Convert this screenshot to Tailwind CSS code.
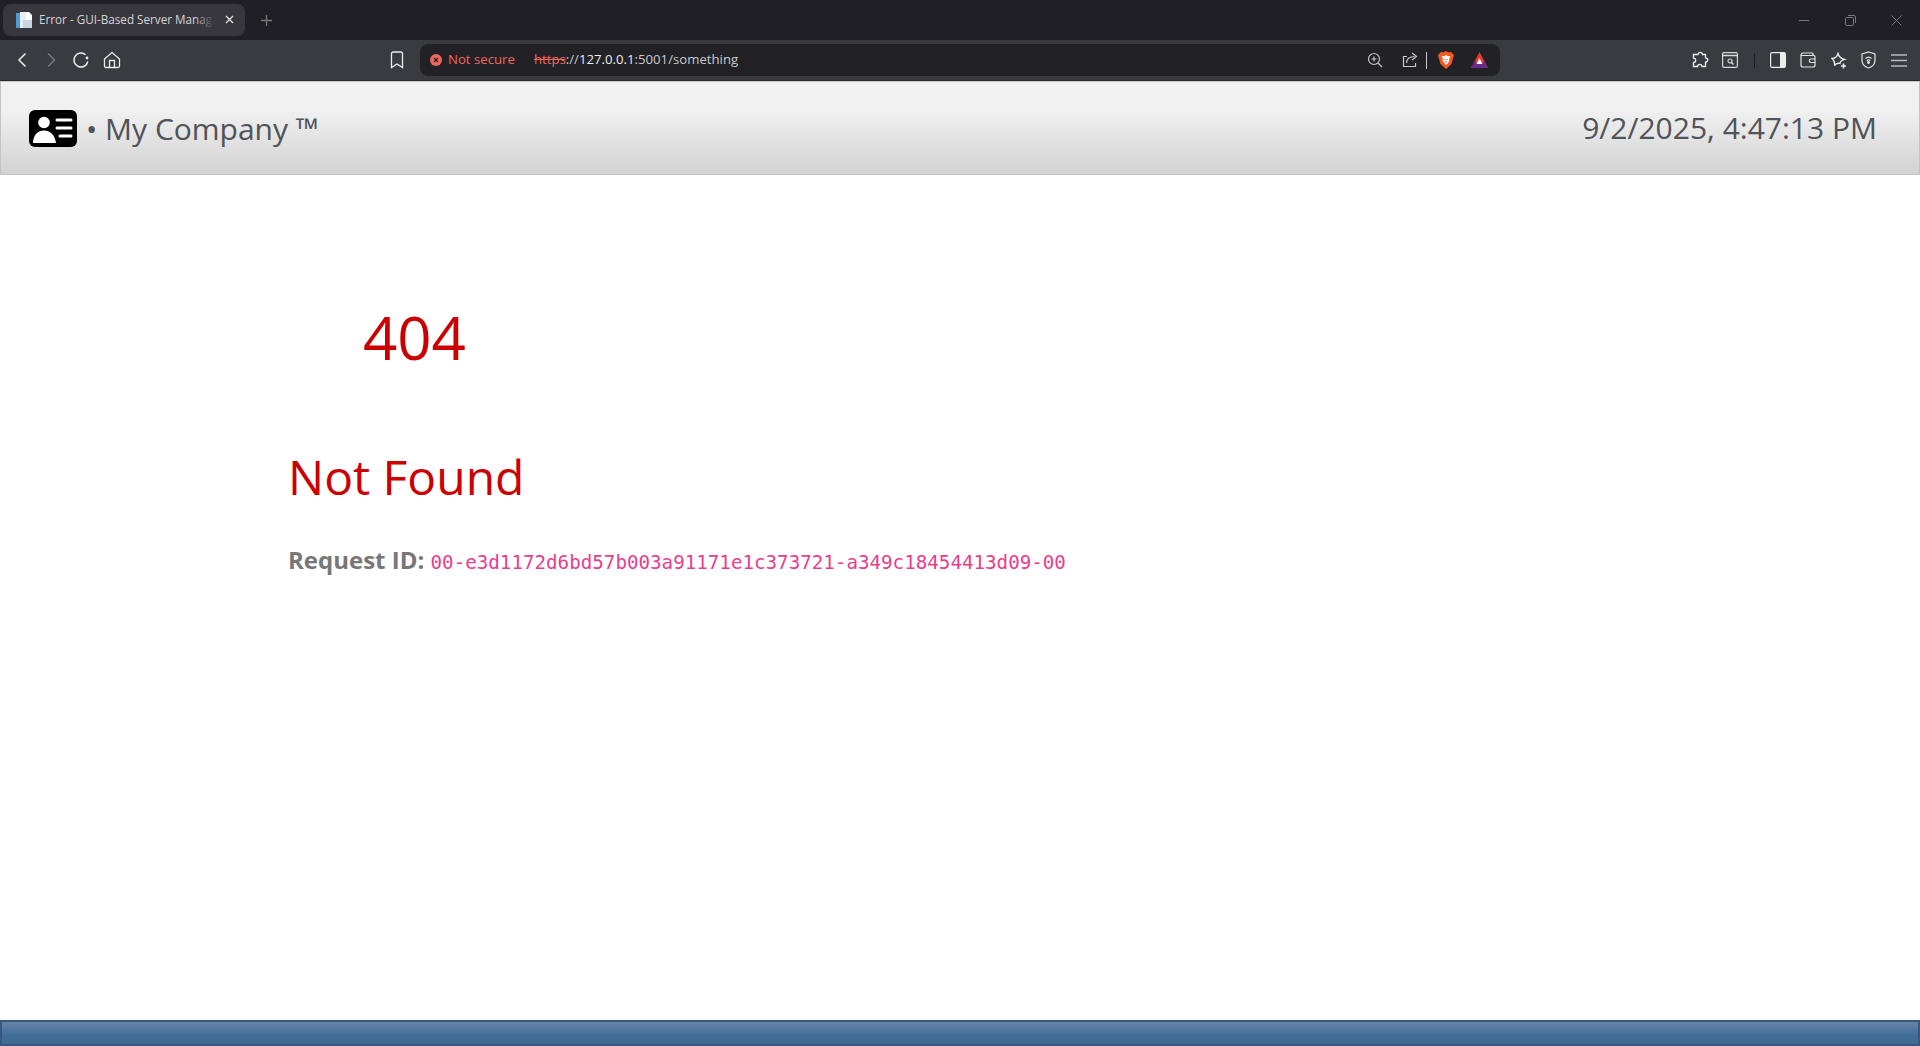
<!DOCTYPE html>
<html lang="en">
<head>
    <meta charset="UTF-8">
    <title>Error - GUI-Based Server Management</title>
    <script src="https://cdn.jsdelivr.net/npm/@tailwindcss/browser@4"></script>
</head>
<body class="flex flex-col h-screen overflow-hidden bg-white font-['Open_Sans',sans-serif]">
    <!-- browser tab strip -->
    <div class="flex items-center h-[40px] shrink-0 bg-[#1f1f25] pl-[3px]">
        <div class="flex items-center w-[242px] h-[32px] rounded-lg bg-[#37373d] pl-[12px] pr-[11px] mt-[-1px]">
            <svg class="w-[18px] h-[18px] shrink-0" viewBox="0 0 18 18">
                <rect x="1" y="2" width="5" height="15" fill="#4f9bd9"/>
                <rect x="5" y="1" width="8" height="16" fill="#e8edf2"/>
                <path d="M11 1h3l3 3v13h-6z" fill="#ffffff"/>
                <rect x="8" y="9" width="9" height="8" fill="#c9d6e2"/>
            </svg>
            <div class="relative ml-[6px] w-[175px] overflow-hidden whitespace-nowrap text-[11.7px] text-[#d6d6d9]">
                Error - GUI-Based Server Management
                <div class="absolute inset-y-0 right-0 w-[20px] bg-gradient-to-r from-transparent to-[#37373d]"></div>
            </div>
            <svg class="w-[9px] h-[9px] ml-auto" viewBox="0 0 9 9" fill="none" stroke="#e4e4e6" stroke-width="1.3"><path d="M1 1l7 7M8 1l-7 7"/></svg>
        </div>
        <svg class="w-[11px] h-[11px] ml-[16px]" viewBox="0 0 11 11" fill="none" stroke="#77777c" stroke-width="1.3"><path d="M5.5 0v11M0 5.5h11"/></svg>
        <div class="flex items-center ml-auto pr-[18px] gap-[35px]">
            <svg class="w-[11px] h-[11px]" viewBox="0 0 11 11" fill="none" stroke="#77777c"><path d="M0 5.5h10"/></svg>
            <svg class="w-[11px] h-[11px]" viewBox="0 0 11 11" fill="none" stroke="#77777c"><rect x=".5" y="2.5" width="8" height="8" rx="1"/><path d="M3 .5h6a1.5 1.5 0 0 1 1.5 1.5v6"/></svg>
            <svg class="w-[11px] h-[11px]" viewBox="0 0 11 11" fill="none" stroke="#77777c"><path d="M.5.5l10 10M10.5.5l-10 10"/></svg>
        </div>
    </div>

    <!-- browser toolbar -->
    <div class="flex items-center h-[41px] shrink-0 bg-[#3a3a41] border-b border-[#2a2a2f] relative">
        <div class="flex items-center pl-[16px] w-[404px]">
            <svg class="w-[12px] h-[16px]" viewBox="0 0 12 16" fill="none" stroke="#ececee" stroke-width="1.5"><path d="M9.5 1.5L3 8l6.5 6.500"/></svg>
            <svg class="w-[12px] h-[16px] ml-[17px]" viewBox="0 0 12 16" fill="none" stroke="#77777c" stroke-width="1.5"><path d="M3 1.5L9.5 8 3 14.500"/></svg>
            <svg class="w-[18px] h-[18px] ml-[15px]" viewBox="0 0 18 18" fill="none" stroke="#ececee" stroke-width="1.5"><path d="M15.8 10.5A7 7 0 1 1 13.6 3.800"/><circle cx="15" cy="7" r="1.400" fill="#ececee" stroke="none"/></svg>
            <svg class="w-[18px] h-[18px] ml-[13px]" viewBox="0 0 18 18" fill="none" stroke="#ececee" stroke-width="1.3"><path d="M1.5 8L9 1.5 16.5 8v7a1.5 1.5 0 0 1-1.5 1.5H3A1.5 1.5 0 0 1 1.5 15z"/><path d="M6.500 16.500V9.500h5v7"/></svg>
            <svg class="w-[14px] h-[18px] ml-auto" viewBox="0 0 14 18" fill="none" stroke="#ececee" stroke-width="1.3"><path d="M1.500 2.500a1.500 1.500 0 0 1 1.500-1.500h8a1.500 1.500 0 0 1 1.500 1.500v14L7 13l-5.500 3.500z"/></svg>
        </div>
        <div class="flex items-center w-[1080px] h-[32px] ml-[16px] rounded-lg bg-[#212126] pl-[10px]">
            <svg class="w-[12px] h-[12px] shrink-0" viewBox="0 0 12 12"><circle cx="6" cy="6" r="6" fill="#f0675c"/><path d="M4 4l4 4M8 4l-4 4" stroke="#212126" stroke-width="1.2"/></svg>
            <span class="ml-[6px] text-[13.2px] text-[#f0675c]">Not secure</span>
            <span class="ml-[19px] text-[13.2px] text-[#c9c9cc]"><span class="line-through text-[#f0675c]">https</span>://<span class="text-[#eeeeee]">127.0.0.1</span>:5001/something</span>
            <div class="flex items-center ml-auto pr-[12px]">
                <svg class="w-[16px] h-[16px]" viewBox="0 0 16 16" fill="none" stroke="#c8c8cb" stroke-width="1.2"><circle cx="7" cy="7" r="5.5"/><path d="M11 11l4 4M7 4.500v5M4.500 7h5"/></svg>
                <svg class="w-[16px] h-[16px] ml-[19px]" viewBox="0 0 16 16" fill="none" stroke="#c8c8cb" stroke-width="1.2"><path d="M5 4.500H1.500v10h12V11"/><path d="M4.500 11c0-4 3-6.500 8-6.500M10 1l4.500 3.500L10 8"/></svg>
                <div class="w-px h-[17px] bg-[#c8c8cb] ml-[8px]"></div>
                <svg class="w-[16px] h-[18px] ml-[11px]" viewBox="0 0 16 18"><path d="M3 1l2.500.2L8 0l2.500 1.200L13 1l3 3-1 3.500-1.500 5.500L8 18l-5.500-5L1 7.500 0 4z" fill="#f25a1f"/><path d="M3.500 5.500L6.500 5 8 4l1.500 1 3 .5-1.500 2.500.5 1.500-1.500 2.500L8 14l-2-2.500L4.500 9.500 5 8z" fill="#ffffff"/><path d="M6 8l1.500.8M10 8l-1.500.8M8 10v2" stroke="#f25a1f" stroke-width="1"/></svg>
                <svg class="w-[17px] h-[16px] ml-[17px]" viewBox="0 0 17 16"><path d="M8.5 0L17 16H0z" fill="#e8372c"/><path d="M0 16l3.500-6.500L8.500 12l5-2.500L17 16z" fill="#6a2a8c"/><path d="M8.5 6l3 6h-6z" fill="#ffffff"/></svg>
            </div>
        </div>
        <div class="flex items-center ml-[192px]">
            <svg class="w-[17px] h-[18px]" viewBox="0 0 17 18" fill="none" stroke="#ececee" stroke-width="1.3"><path d="M6 3.500a2.200 2.200 0 1 1 4.400 0H13.500v3.300a2.200 2.200 0 1 1 0 4.400v4.300H10a2.200 2.200 0 1 0-4.400 0H1.500v-4a2.200 2.200 0 1 0 0-4.400V3.500z"/></svg>
            <svg class="w-[16px] h-[16px] ml-[13px]" viewBox="0 0 16 16" fill="none" stroke="#d8d8da" stroke-width="1.2"><rect x=".6" y=".6" width="14.8" height="14.8" rx="1.5"/><path d="M.6 3.500h14.800" stroke-width="1.5"/><circle cx="8" cy="9" r="2"/><path d="M9.500 10.500l2 2" stroke-width="1.5"/></svg>
            <div class="w-px h-[15px] bg-[#1f1f25] ml-[16px]"></div>
            <svg class="w-[16px] h-[16px] ml-[15px]" viewBox="0 0 16 16"><rect x=".6" y=".6" width="14.8" height="14.8" rx="1.5" fill="none" stroke="#ececee" stroke-width="1.2"/><rect x="10" y="1" width="5" height="14" fill="#ececee"/></svg>
            <svg class="w-[16px] h-[16px] ml-[14px]" viewBox="0 0 16 16" fill="none" stroke="#e4e4e6" stroke-width="1.2"><path d="M13 3.500V2a1 1 0 0 0-1-1H3a2 2 0 0 0-2 2v10a2 2 0 0 0 2 2h10a2 2 0 0 0 2-2V5a1.500 1.500 0 0 0-2-1.500H1.500"/><path d="M15 7h-4a1.500 1.500 0 0 0 0 3.500h4"/></svg>
            <svg class="w-[16px] h-[17px] ml-[15px]" viewBox="0 0 16 17" fill="none" stroke="#ececee" stroke-width="1.3"><path d="M7 1.500C8 5 9.500 6.500 13.500 7.500 10 8.500 9 10 9 11.500 7.500 11 5 11.500 3.500 13.500 4 10.500 3.500 8.500 1 6.500 4 6.500 6 5 7 1.500z"/><path d="M12.500 11.500v5M10 14h5" stroke-width="1.5"/></svg>
            <svg class="w-[15px] h-[18px] ml-[14px]" viewBox="0 0 15 18" fill="none" stroke="#e4e4e6" stroke-width="1.2"><path d="M7.500 1l6.500 2v6c0 4-3 7-6.500 8C4 16 1 13 1 9V3z"/><path d="M4.500 7.500a4.500 4.500 0 0 1 6 0M5.800 9.500a2.700 2.700 0 0 1 3.400 0"/><circle cx="7.5" cy="11.5" r=".8" fill="#e4e4e6"/></svg>
            <svg class="w-[16px] h-[13px] ml-[15px]" viewBox="0 0 16 13" fill="none" stroke="#b8b8bb" stroke-width="1.6"><path d="M0 1h16M0 6.500h16M0 12h16"/></svg>
        </div>
    </div>

    <!-- page header -->
    <header class="flex items-center justify-between h-[94px] shrink-0 border border-[#c4c4c4] bg-gradient-to-b from-[#f1f1f1] from-30% to-[#d2d2d2] pl-[28px] pr-[42px] text-[#505357]">
        <div class="flex items-center">
            <svg class="w-[48px] h-[37px]" viewBox="0 0 48 37">
                <rect width="48" height="37" rx="6" fill="#000"/>
                <circle cx="15" cy="12.5" r="5.8" fill="#fff"/>
                <path d="M4 33c0-8 5-12.500 11-12.500S26 25 27 33z" fill="#fff"/>
                <path d="M28 10h14M28 18h14M31 26h11" stroke="#fff" stroke-width="3" stroke-linecap="round"/>
            </svg>
            <span class="ml-[9px] text-[30px]">• My Company ™</span>
        </div>
        <span class="text-[30px] mt-[-1px]">9/2/2025, 4:47:13 PM</span>
    </header>

    <!-- error content -->
    <main class="flex-1 pl-[288px] pt-[126px]">
        <h1 class="pl-[75px] text-[60px] leading-[72px] text-[#cc0000]">404</h1>
        <h2 class="mt-[75px] text-[48px] leading-[58px] text-[#cc0000]">Not Found</h2>
        <p class="mt-[36px] text-[24px] leading-[36px] text-[#777777]">
            <strong class="font-bold">Request ID:</strong>
            <code class="font-['DejaVu_Sans_Mono',monospace] text-[19.2px] text-[#e83e8c]">00-e3d1172d6bd57b003a91171e1c373721-a349c18454413d09-00</code>
        </p>
    </main>

    <footer class="h-[26px] shrink-0 border-2 border-[#37597f] bg-gradient-to-b from-[#6485a9] via-[#436d98] via-60% to-[#3f6891]"></footer>
</body>
</html>
